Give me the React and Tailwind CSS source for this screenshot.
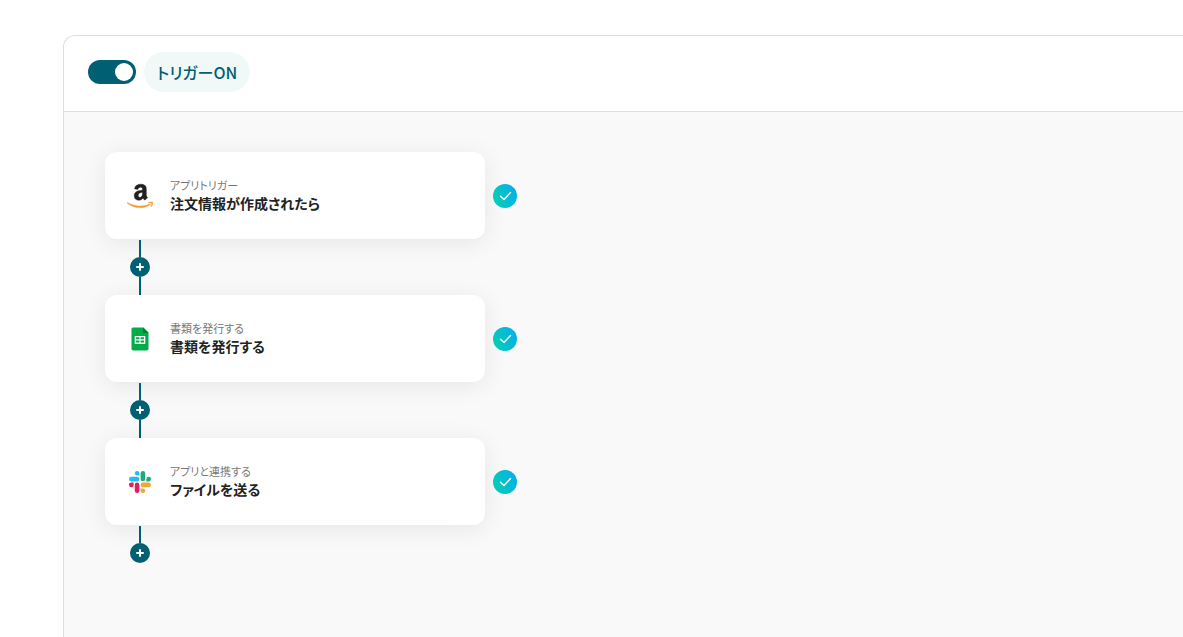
import React, { useState } from "react";
import clsx from "clsx";
import { SiAmazon } from "react-icons/si";

function AmazonLogo() {
  return (
    <>
      <svg width="0" height="0" className="absolute" aria-hidden="true">
        <linearGradient id="amazon-fill" gradientUnits="userSpaceOnUse" x1="0" y1="0" x2="0" y2="24">
          <stop offset="0.71" stopColor="#221f1f" />
          <stop offset="0.71" stopColor="#f79c34" />
        </linearGradient>
      </svg>
      <SiAmazon
        className="h-[26px] w-[26px]"
        style={{ fill: "url(#amazon-fill)", stroke: "url(#amazon-fill)", strokeWidth: 0.4 }}
      />
    </>
  );
}

function SheetsLogo() {
  return (
    <svg viewBox="0 0 28 28" className="h-7 w-7" aria-hidden="true">
      <path d="M7 2.5h10.5l5 5v16.3a1.7 1.7 0 0 1-1.7 1.7H7.2a1.7 1.7 0 0 1-1.7-1.7V4A1.5 1.5 0 0 1 7 2.5z" fill="#00ac47" />
      <path d="M17 2.5l5.5 5.5H18a1 1 0 0 1-1-1z" fill="#00832d" />
      <rect x="8.7" y="11" width="10.6" height="8" fill="#fff" />
      <path d="M10 12.3h3.4v2H10zM14.6 12.3H18v2h-3.4zM10 15.6h3.4v2H10zM14.6 15.6H18v2h-3.4z" fill="#00ac47" />
    </svg>
  );
}

function SlackLogo() {
  return (
    <svg viewBox="0 0 24 24" className="h-[22px] w-[22px]" aria-hidden="true">
      <path d="M5.042 15.165a2.528 2.528 0 1 1-2.52-2.523h2.52zM6.313 15.165a2.521 2.521 0 0 1 5.042 0v6.313a2.521 2.521 0 0 1-5.042 0z" fill="#e01e5a" />
      <path d="M8.834 5.042a2.521 2.521 0 1 1 2.521-2.52v2.52zM8.834 6.313a2.521 2.521 0 0 1 0 5.042H2.522a2.521 2.521 0 0 1 0-5.042z" fill="#1ebfee" />
      <path d="M18.956 8.834a2.522 2.522 0 1 1 2.522 2.521h-2.522zM17.688 8.834a2.522 2.522 0 0 1-5.043 0V2.522a2.522 2.522 0 0 1 5.043 0z" fill="#25a777" />
      <path d="M15.165 18.956a2.522 2.522 0 1 1-2.52 2.522v-2.522zM15.165 17.688a2.522 2.522 0 0 1 0-5.043h6.313a2.522 2.522 0 0 1 0 5.043z" fill="#eca93b" />
    </svg>
  );
}

function DoneBadge() {
  return (
    <svg viewBox="0 0 24 24" className="mt-8 ml-2 h-6 w-6 shrink-0" role="img" aria-label="完了">
      <defs>
        <linearGradient id="done-fill" x1="0" y1="0.7" x2="1" y2="0.3">
          <stop offset="0" stopColor="#06ceb4" />
          <stop offset="1" stopColor="#05afea" />
        </linearGradient>
      </defs>
      <circle cx="12" cy="12" r="12" fill="url(#done-fill)" />
      <path d="M7.5 12.2l3.5 3.3 6.5-7" fill="none" stroke="#fff" strokeWidth="1.4" strokeLinecap="round" strokeLinejoin="round" />
    </svg>
  );
}

function AddConnector({ last }) {
  return (
    <div className="flex w-[70px] flex-col items-center">
      <span className="h-[17px] w-0.5 bg-[#005f73]" />
      <button
        type="button"
        aria-label="ステップを追加"
        className="flex h-5 w-5 items-center justify-center rounded-full bg-[#005f73]"
      >
        <svg viewBox="0 0 8 8" className="h-2 w-2" aria-hidden="true">
          <path d="M4 1v6M1 4h6" stroke="#fff" strokeWidth="2" strokeLinecap="round" />
        </svg>
      </button>
      {!last && <span className="h-[18px] w-0.5 bg-[#005f73]" />}
    </div>
  );
}

const STEPS = [
  { label: "アプリトリガー", title: "注文情報が作成されたら", Logo: AmazonLogo },
  { label: "書類を発行する", title: "書類を発行する", Logo: SheetsLogo },
  { label: "アプリと連携する", title: "ファイルを送る", Logo: SlackLogo },
];

export default function App() {
  const [enabled, setEnabled] = useState(true);

  return (
    <main className="flex min-h-screen flex-col bg-white pt-[35px] pl-[63px] font-['Noto_Sans_CJK_JP',sans-serif] [font-feature-settings:'palt']">
      <section className="flex flex-1 flex-col overflow-hidden rounded-tl-xl border-t border-l border-[#dedede]">
        <header className="flex items-center gap-2 border-b border-[#dedede] px-6 pt-4 pb-[19px]">
          <label htmlFor="trigger" className="flex items-center gap-2">
            <input
              id="trigger"
              type="checkbox"
              role="switch"
              checked={enabled}
              onChange={(e) => setEnabled(e.target.checked)}
              className={clsx(
                "h-6 w-12 appearance-none rounded-full p-[3px] before:block before:h-[18px] before:w-[18px] before:rounded-full before:bg-white",
                enabled ? "bg-[#005f73] before:ml-auto" : "bg-gray-300"
              )}
            />
            <span className="rounded-full bg-[#f0f9f8] px-[13px] py-2 text-base leading-6 font-medium text-[#005f73]">
              {enabled ? "トリガーON" : "トリガーOFF"}
            </span>
          </label>
        </header>

        <div className="flex-1 bg-[#f9f9f9] px-[41px] py-10">
          {STEPS.map(({ label, title, Logo }, i) => (
            <div key={title}>
              <div className="flex h-[88px] items-start">
                <article className="flex h-[87px] w-[380px] items-center rounded-xl bg-white pr-6 shadow-[0_4px_24px_rgba(0,0,0,0.08)]">
                  <div className="flex w-[70px] shrink-0 justify-center">
                    <Logo />
                  </div>
                  <div className="-ml-[5px]">
                    <p className="text-[11px] leading-4 text-[#777]">{label}</p>
                    <h2 className="text-sm leading-[21px] font-bold text-[#222]">{title}</h2>
                  </div>
                </article>
                <DoneBadge />
              </div>
              <AddConnector last={i === STEPS.length - 1} />
            </div>
          ))}
        </div>
      </section>
    </main>
  );
}
